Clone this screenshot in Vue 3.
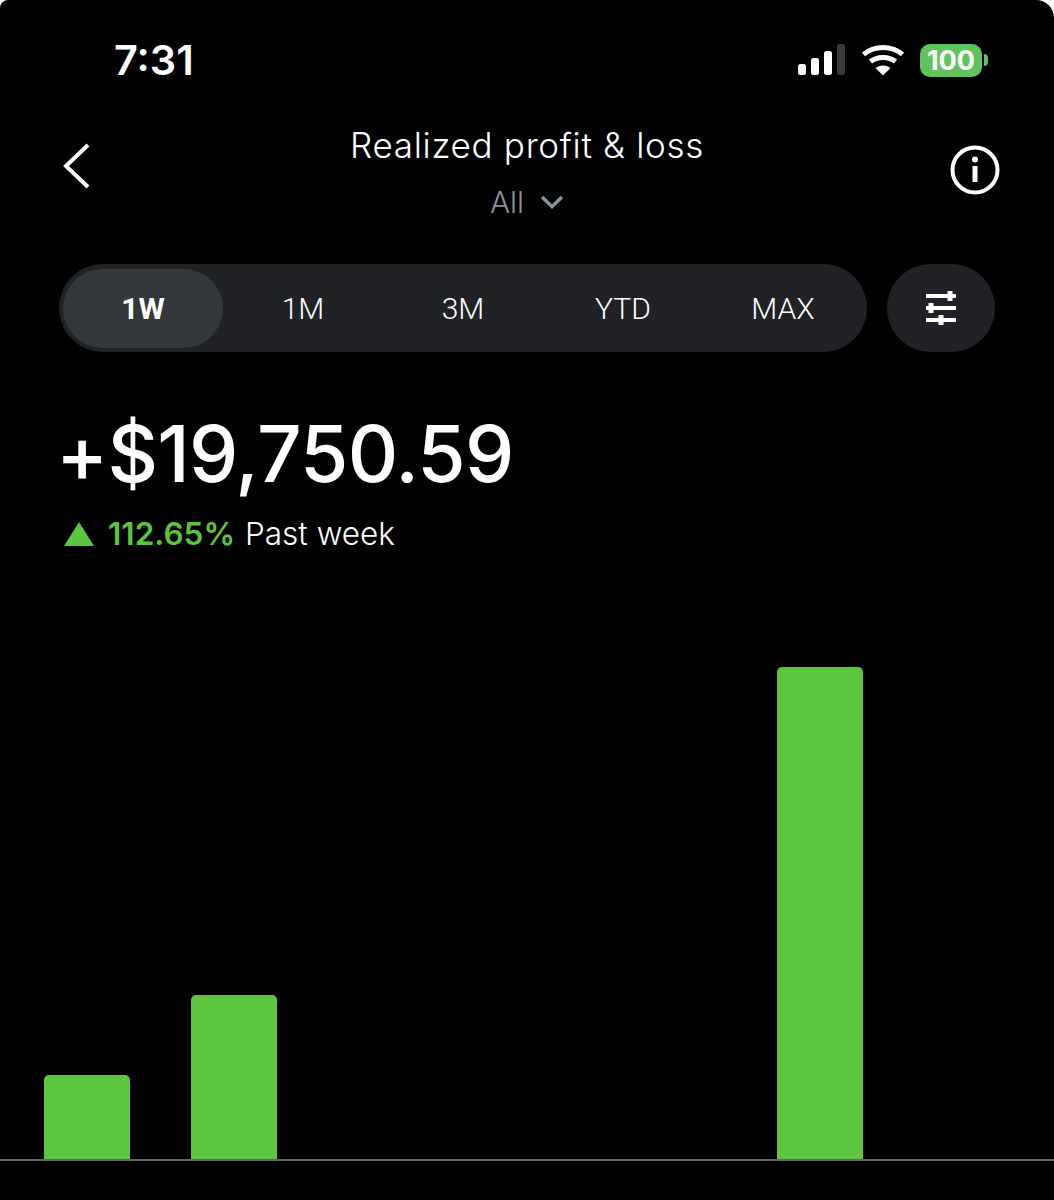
<script setup>
const tabs = ['1W', '1M', '3M', 'YTD', 'MAX']

// one bar per day, height in px
const bars = [84, 164, 0, 0, 0, 492, 0]
</script>

<template>
  <div class="screen">
    <div class="status-bar">
      <span class="time">7:31</span>
      <div class="status-icons">
        <svg class="signal" width="48" height="32" viewBox="0 0 48 32">
          <rect x="0" y="20" width="8" height="11" rx="2.5" fill="#fff" />
          <rect x="13" y="14" width="8" height="17" rx="2.5" fill="#fff" />
          <rect x="26" y="7" width="8" height="24" rx="2.5" fill="#fff" />
          <rect x="39" y="0" width="8" height="31" rx="2.5" fill="#3a3a3c" />
        </svg>
        <svg class="wifi" width="42" height="32" viewBox="0 0 42 32">
          <path d="M1.500 10.500C12 1 30 1 40.500 10.500" fill="none" stroke="#fff" stroke-width="5" />
          <path d="M8.500 17.500C15 12 27 12 33.500 17.500" fill="none" stroke="#fff" stroke-width="5" />
          <path d="M21 31.500L13.500 24C17.500 20.500 24.500 20.500 28.500 24Z" fill="#fff" />
        </svg>
        <div class="battery">
          <span class="battery-level">100</span>
          <span class="battery-cap"></span>
        </div>
      </div>
    </div>

    <header class="nav">
      <svg class="back" width="30" height="46" viewBox="0 0 30 46">
        <path d="M26 2L4 23L26 44" fill="none" stroke="#fff" stroke-width="4" />
      </svg>
      <div class="nav-title">
        <div class="title">Realized profit &amp; loss</div>
        <div class="subtitle">
          All
          <svg width="24" height="14" viewBox="0 0 24 14">
            <path d="M2 2L12 11.500L22 2" fill="none" stroke="#8a9299" stroke-width="3.500" />
          </svg>
        </div>
      </div>
      <svg class="info" width="50" height="50" viewBox="0 0 50 50">
        <circle cx="25" cy="25" r="22.500" fill="none" stroke="#fff" stroke-width="4" />
        <circle cx="25" cy="14.500" r="3" fill="#fff" />
        <rect x="22.500" y="21" width="5" height="16" fill="#fff" />
      </svg>
    </header>

    <div class="range-row">
      <div class="range-tabs">
        <div v-for="(tab, i) in tabs" :key="tab" :class="['tab', { active: i === 0 }]">{{ tab }}</div>
      </div>
      <button class="filter-btn">
        <svg width="32" height="34" viewBox="0 0 32 34">
          <path d="M1 5H31M1 17H31M1 29H31" stroke="#fff" stroke-width="4" />
          <path d="M25 0V10M6 12V22M16 24V34" stroke="#fff" stroke-width="5" />
        </svg>
      </button>
    </div>

    <div class="summary">
      <div class="amount">+$19,750.59</div>
      <div class="change">
        <svg width="30" height="24" viewBox="0 0 30 24">
          <path d="M15 0L30 24H0Z" fill="#5ac63e" />
        </svg>
        <span class="percent">112.65%</span>
        <span class="period">Past week</span>
      </div>
    </div>

    <div class="chart">
      <div v-for="(h, i) in bars" :key="i" class="bar-slot">
        <div v-if="h" class="bar" :style="{ height: h + 'px' }"></div>
      </div>
    </div>
  </div>
</template>

<style>
html, body {
  margin: 0;
  background: #fff;
}
</style>

<style scoped>
.screen {
  width: 1054px;
  height: 1200px;
  background: #000;
  color: #fff;
  border-radius: 8px 18px 0 0;
  font-family: Inter, "Liberation Sans", sans-serif;
  display: flex;
  flex-direction: column;
  overflow: hidden;
}

.status-bar {
  height: 120px;
  box-sizing: border-box;
  padding: 38px 66px 0 114px;
  display: flex;
  justify-content: space-between;
  align-items: flex-start;
}

.time {
  font-size: 41.500px;
  line-height: 44px;
  font-weight: 600;
}

.status-icons {
  display: flex;
  align-items: center;
  gap: 16px;
  height: 44px;
}

.battery {
  display: flex;
  align-items: center;
  gap: 2px;
}

.battery-level {
  width: 62px;
  height: 33px;
  line-height: 33px;
  background: #61c35f;
  border-radius: 10px;
  text-align: center;
  font-size: 27px;
  font-weight: 700;
}

.battery-cap {
  width: 4px;
  height: 12px;
  background: #61c35f;
  border-radius: 0 4px 4px 0;
}

.nav {
  height: 144px;
  box-sizing: border-box;
  padding: 0 54px 0 54px;
  display: grid;
  grid-template-columns: 1fr auto 1fr;
  align-items: start;
}

.back {
  margin: 23px 0 0 8px;
}

.nav-title {
  text-align: center;
}

.title {
  font-size: 35px;
  line-height: 50px;
  font-weight: 300;
  letter-spacing: 0.7px;
}

.subtitle {
  font-size: 30px;
  line-height: 44px;
  font-weight: 300;
  color: #8a9299;
  display: flex;
  justify-content: center;
  align-items: center;
  gap: 16px;
  margin-top: 10px;
}

.info {
  margin-top: 25px;
  justify-self: end;
}

.range-row {
  display: flex;
  gap: 20px;
  padding: 0 59px;
}

.range-tabs {
  width: 808px;
  height: 88px;
  flex-shrink: 0;
  background: #212225;
  border-radius: 44px;
  display: grid;
  grid-template-columns: 164px repeat(4, 160px);
  align-items: center;
  text-align: center;
  font-family: Roboto, Inter, sans-serif;
  font-size: 30px;
  font-weight: 300;
}

.tab.active {
  height: 79px;
  margin-left: 4px;
  line-height: 79px;
  font-weight: 700;
  background: #33383b;
  border-radius: 40px;
}

.filter-btn {
  width: 108px;
  height: 88px;
  flex-shrink: 0;
  padding: 0;
  border: none;
  background: #212225;
  border-radius: 44px;
  display: flex;
  align-items: center;
  justify-content: center;
}

.summary {
  padding: 58px 0 0 56px;
}

.amount {
  font-size: 78.300px;
  line-height: 88px;
  font-weight: 450;
  letter-spacing: -0.8px;
}

.change {
  display: flex;
  align-items: center;
  gap: 14px;
  font-size: 31.500px;
  line-height: 40px;
  margin-top: 16px;
  padding-left: 8px;
}

.percent {
  color: #5ac63e;
  font-weight: 600;
}

.period {
  margin-left: -4px;
  font-weight: 300;
}

.chart {
  flex: 1;
  margin-bottom: 39px;
  padding: 0 45px 0 44px;
  border-bottom: 2px solid #666;
  display: grid;
  grid-template-columns: repeat(7, 86px);
  justify-content: space-between;
  align-items: end;
}

.bar {
  background: #5cc63f;
  border-radius: 5px 5px 0 0;
}
</style>
